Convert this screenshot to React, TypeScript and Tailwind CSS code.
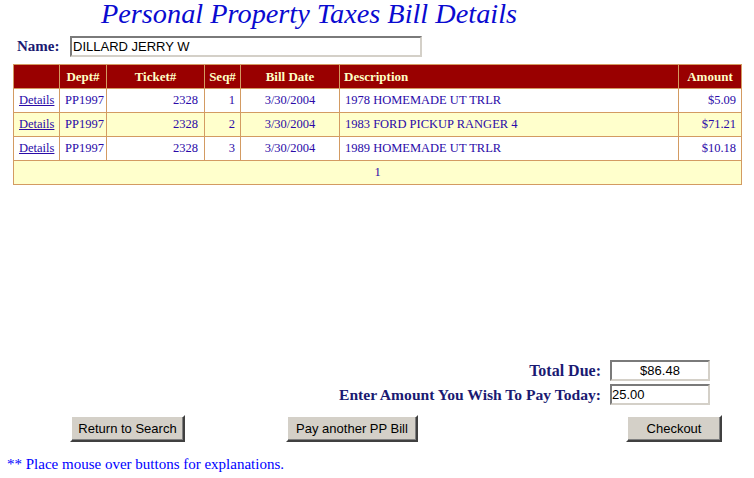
import React from "react";

const rows = [
  { seq: "1", desc: "1978 HOMEMADE UT TRLR", amt: "$5.09", alt: false },
  { seq: "2", desc: "1983 FORD PICKUP RANGER 4", amt: "$71.21", alt: true },
  { seq: "3", desc: "1989 HOMEMADE UT TRLR", amt: "$10.18", alt: false },
];

function Btn({ label, w }: { label: string; w: string }) {
  return (
    <button
      className={`${w} h-[27px] bg-[#d4d0c8] border-2 border-t-white border-l-white border-b-[#404040] border-r-[#404040] text-[13px] text-black [font-family:'Liberation_Sans',Arial,sans-serif] shadow-[inset_-1px_-1px_0_#808080]`}
    >
      {label}
    </button>
  );
}

export default function App() {
  const td = "border border-[#d39b62] h-[24px] px-[5px] text-[12.5px] text-[#2a0aa8] leading-none";
  const th = "border border-[#d39b62] h-[24px] px-[4px] text-[13px] text-[#ffffc6] font-bold leading-none";
  return (
    <div className="w-[754px] h-[478px] bg-white [font-family:'Liberation_Serif','Times_New_Roman',serif] relative overflow-hidden">
      <div className="pl-[101px] h-[30px] text-[28.3px] italic text-[#0a0ad0] leading-[27px] whitespace-nowrap">
        Personal Property Taxes Bill Details
      </div>
      <div className="flex items-center pl-[17px] mt-[6px] h-[21px]">
        <span className="text-[15px] font-bold text-[#1a1a72] w-[53px]">Name:</span>
        <input
          readOnly
          value="DILLARD JERRY W"
          className="w-[352px] h-[21px] border-2 border-t-[#7a7a7a] border-l-[#7a7a7a] border-b-[#d4d0c8] border-r-[#d4d0c8] px-[1px] text-[13px] text-black [font-family:'Liberation_Sans',Arial,sans-serif] outline-none"
        />
      </div>
      <table className="ml-[13px] mt-[7px] w-[728px] table-fixed border-collapse border border-[#d39b62]">
        <colgroup>
          <col className="w-[46px]" />
          <col className="w-[47px]" />
          <col className="w-[98px]" />
          <col className="w-[36px]" />
          <col className="w-[99px]" />
          <col className="w-[339px]" />
          <col className="w-[63px]" />
        </colgroup>
        <thead>
          <tr className="bg-[#990000]">
            <th className={th}></th>
            <th className={`${th} text-center`}>Dept#</th>
            <th className={`${th} text-center`}>Ticket#</th>
            <th className={`${th} text-center`}>Seq#</th>
            <th className={`${th} text-center`}>Bill Date</th>
            <th className={`${th} text-left`}>Description</th>
            <th className={`${th} text-center`}>Amount</th>
          </tr>
        </thead>
        <tbody>
          {rows.map((r) => (
            <tr key={r.seq} className={r.alt ? "bg-[#ffffcc]" : "bg-white"}>
              <td className={`${td} text-left px-[4px]`}>
                <span className="underline">Details</span>
              </td>
              <td className={`${td} text-left px-[4px]`}>PP1997</td>
              <td className={`${td} text-right px-[6px]`}>2328</td>
              <td className={`${td} text-right px-[4px]`}>{r.seq}</td>
              <td className={`${td} text-center`}>3/30/2004</td>
              <td className={`${td} text-left px-[3px]`}>{r.desc}</td>
              <td className={`${td} text-right px-[4px]`}>{r.amt}</td>
            </tr>
          ))}
          <tr className="bg-[#ffffcc]">
            <td colSpan={7} className={`${td} text-center`}>1</td>
          </tr>
        </tbody>
      </table>
      <div className="mt-[175px] flex flex-col items-end pr-[44px] gap-[3px]">
        <div className="flex items-center h-[21px]">
          <span className="text-[16px] font-bold text-[#1a1a72] mr-[9px]">Total Due:</span>
          <input
            readOnly
            value="$86.48"
            className="w-[100px] h-[21px] border-2 border-t-[#7a7a7a] border-l-[#7a7a7a] border-b-[#d4d0c8] border-r-[#d4d0c8] text-center text-[13px] text-black [font-family:'Liberation_Sans',Arial,sans-serif] outline-none"
          />
        </div>
        <div className="flex items-center h-[21px]">
          <span className="text-[15.6px] font-bold text-[#1a1a72] mr-[9px]">Enter Amount You Wish To Pay Today:</span>
          <input
            readOnly
            value="25.00"
            className="w-[100px] h-[21px] border-2 border-t-[#7a7a7a] border-l-[#7a7a7a] border-b-[#d4d0c8] border-r-[#d4d0c8] px-0 text-[13px] text-black [font-family:'Liberation_Sans',Arial,sans-serif] outline-none"
          />
        </div>
      </div>
      <div className="flex mt-[10px] pl-[70px]">
        <Btn label="Return to Search" w="w-[115px]" />
        <div className="w-[101px]" />
        <Btn label="Pay another PP Bill" w="w-[132px]" />
        <div className="w-[208px]" />
        <Btn label="Checkout" w="w-[96px]" />
      </div>
      <div className="pl-[7px] mt-[14px] text-[15px] text-[#0000ff] leading-[16px]">
        ** Place mouse over buttons for explanations.
      </div>
    </div>
  );
}
